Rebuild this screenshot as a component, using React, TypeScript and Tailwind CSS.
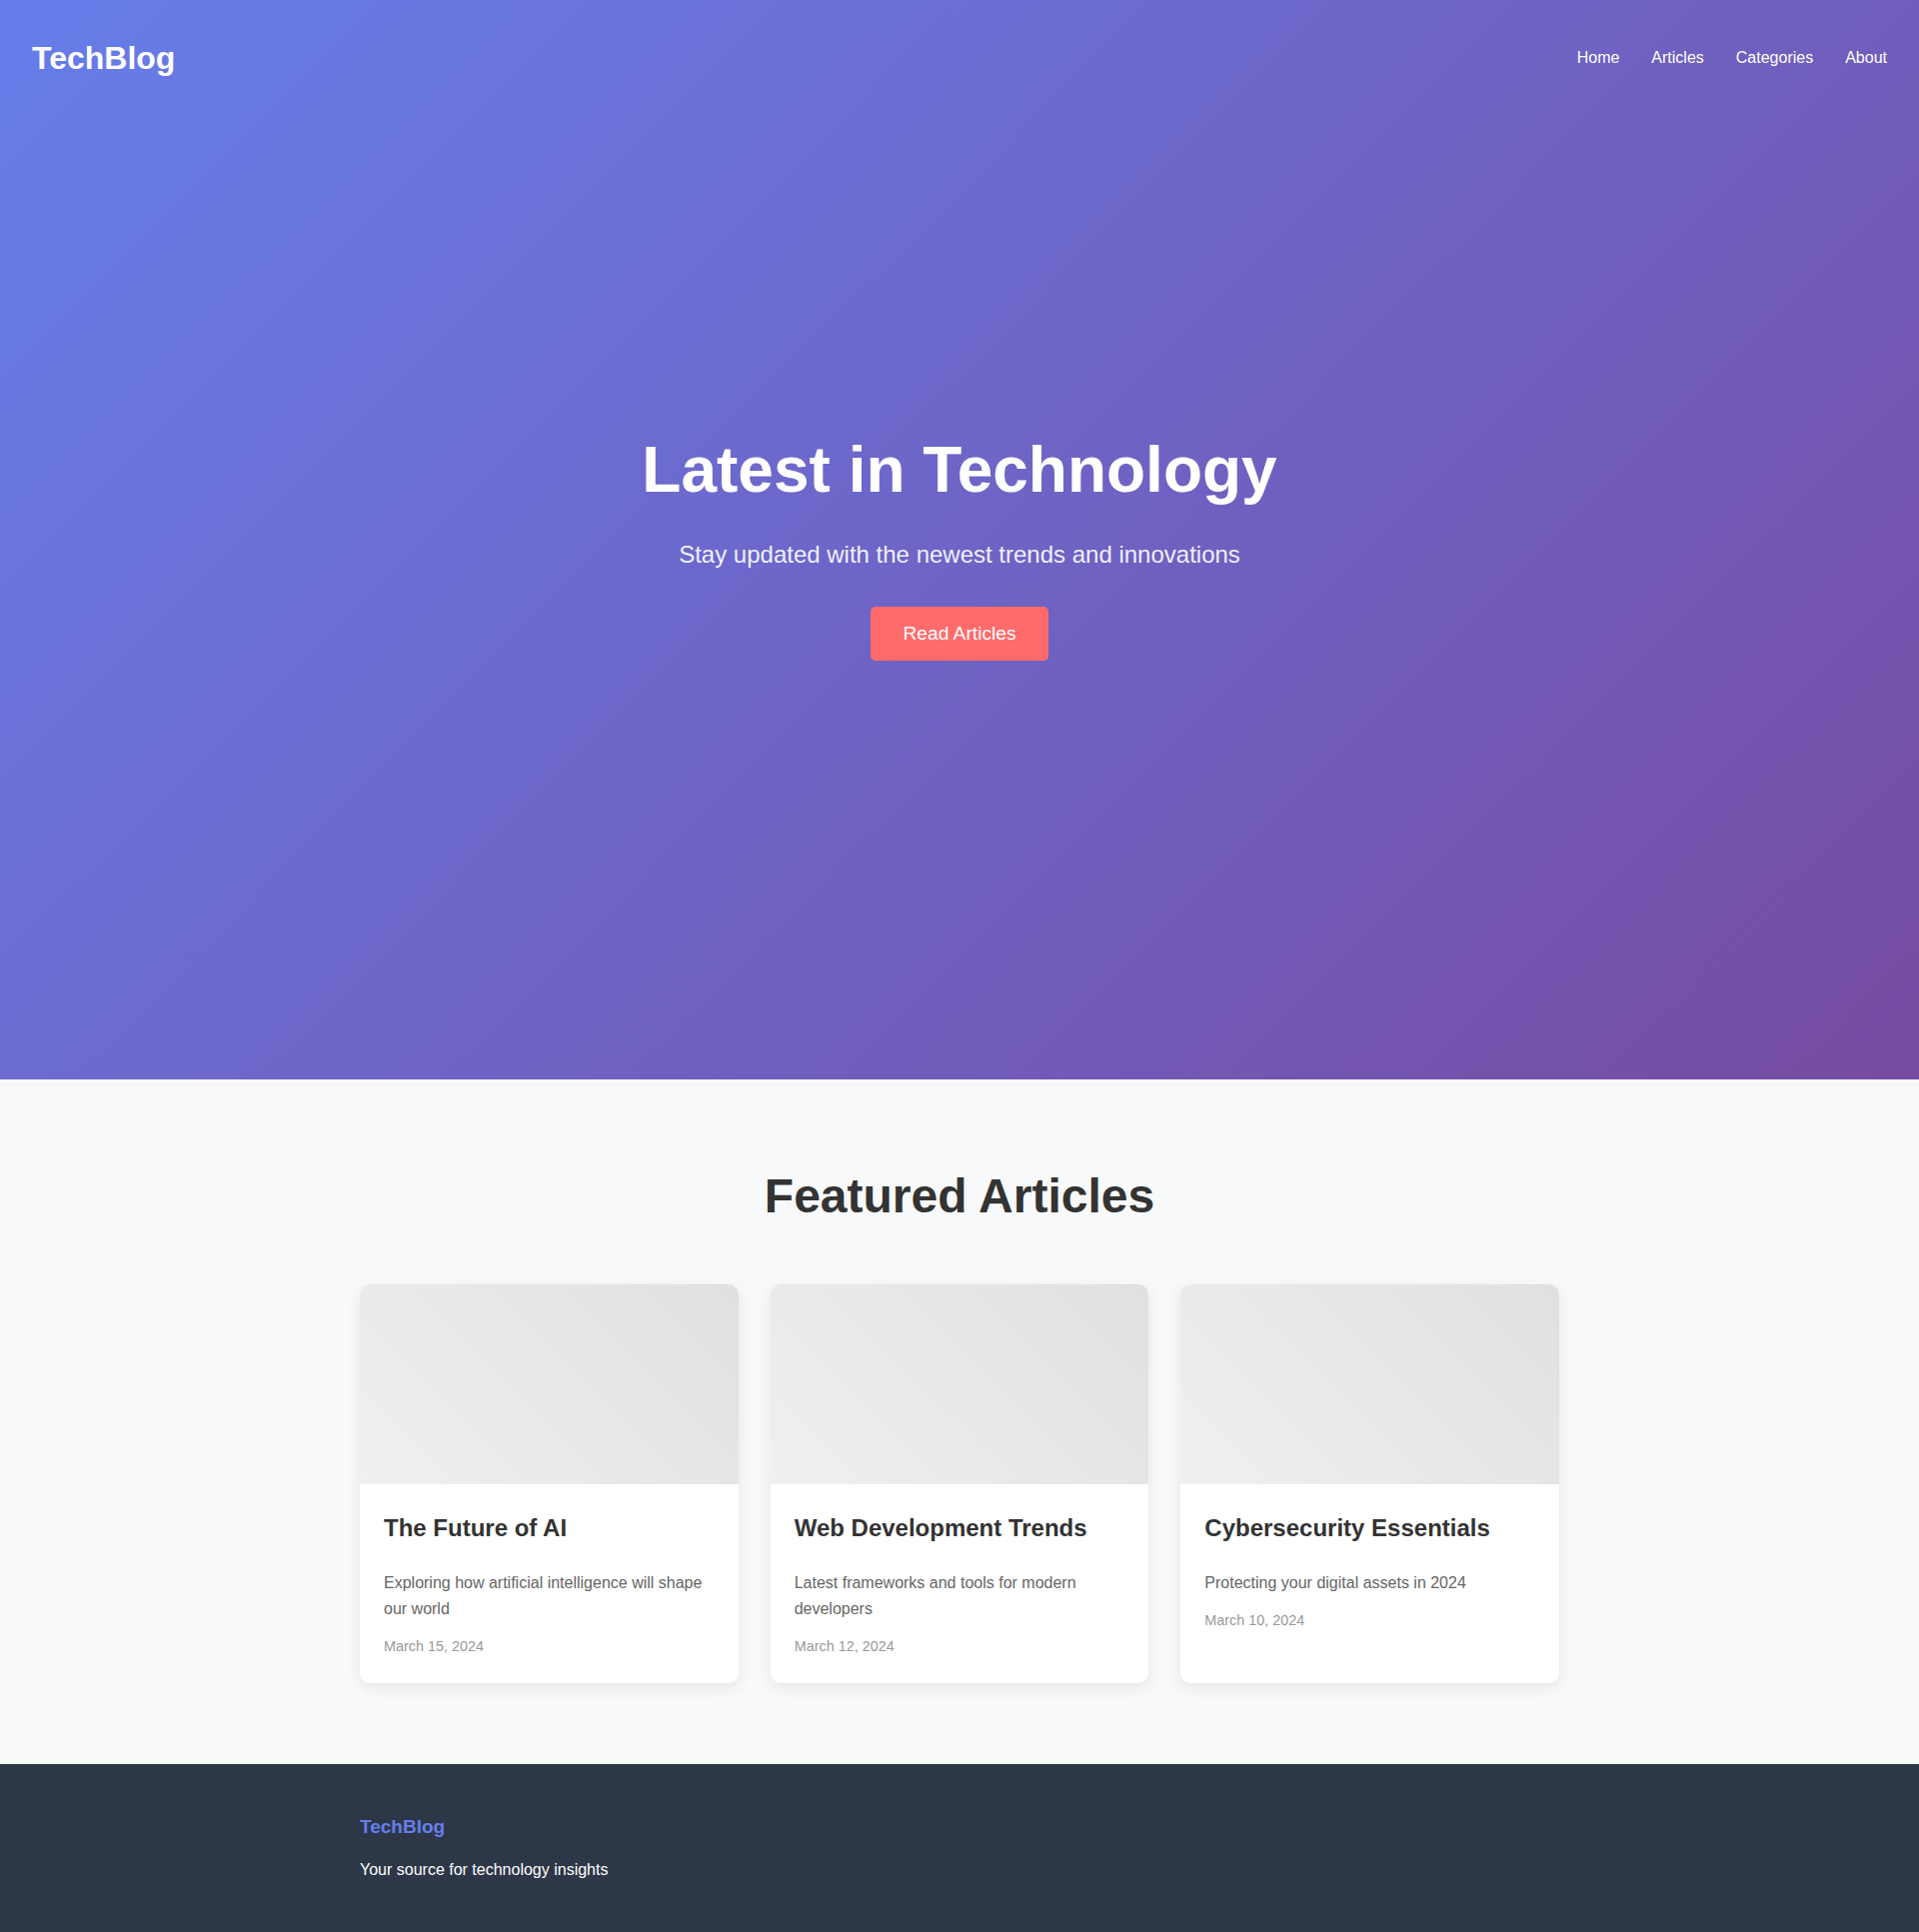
const navLinks = ['Home', 'Articles', 'Categories', 'About'];

const articles = [
  {
    title: 'The Future of AI',
    excerpt: 'Exploring how artificial intelligence will shape our world',
    date: 'March 15, 2024',
  },
  {
    title: 'Web Development Trends',
    excerpt: 'Latest frameworks and tools for modern developers',
    date: 'March 12, 2024',
  },
  {
    title: 'Cybersecurity Essentials',
    excerpt: 'Protecting your digital assets in 2024',
    date: 'March 10, 2024',
  },
];

export default function App() {
  return (
    <div className="min-h-screen bg-[#f8f9fa] font-['Liberation_Sans',Arial,sans-serif] leading-[1.6] text-[#333]">
      {/* Hero */}
      <section className="flex h-[1080px] flex-col bg-[linear-gradient(135deg,#667eea_0%,#764ba2_100%)] text-white">
        <header className="flex h-[116px] items-center justify-between px-8">
          <a href="#" className="text-[32px] font-bold leading-[1.15]">
            TechBlog
          </a>
          <nav className="flex gap-8">
            {navLinks.map((link) => (
              <a key={link} href="#" className="text-base leading-[1.15]">
                {link}
              </a>
            ))}
          </nav>
        </header>

        <div className="flex flex-col items-center pt-[318px] text-center">
          <h1 className="mb-[33px] text-[64px] font-bold leading-[1.15]">Latest in Technology</h1>
          <p className="mb-[39px] text-2xl leading-[1.15] opacity-90">
            Stay updated with the newest trends and innovations
          </p>
          <button className="rounded-[5px] bg-[#ff6b6b] px-8 py-4 text-[19.2px] leading-[1.15] text-white">
            Read Articles
          </button>
        </div>
      </section>

      {/* Featured */}
      <section className="px-8 pb-[81px] pt-[89px]">
        <div className="mx-auto max-w-[1200px]">
          <h2 className="mb-[61px] text-center text-5xl font-bold leading-[1.15] text-[#333]">
            Featured Articles
          </h2>
          <div className="grid grid-cols-3 gap-8">
            {articles.map((a) => (
              <article
                key={a.title}
                className="overflow-hidden rounded-[10px] bg-white shadow-[0_5px_15px_rgba(0,0,0,0.08)]"
              >
                <div className="h-[200px] bg-[linear-gradient(45deg,#f0f0f0,#e0e0e0)]" />
                <div className="px-6 pb-6 pt-7">
                  <h3 className="mb-[26px] text-2xl font-bold text-[#333]">{a.title}</h3>
                  <p className="mb-[11px] text-base leading-[26px] text-[#666]">{a.excerpt}</p>
                  <span className="text-[14.4px] text-[#999]">{a.date}</span>
                </div>
              </article>
            ))}
          </div>
        </div>
      </section>

      {/* Footer */}
      <footer className="bg-[#2d3748] px-8 pb-[51px] pt-12 text-white">
        <div className="mx-auto max-w-[1200px]">
          <h3 className="mb-4 text-[19px] font-bold text-[#667eea]">TechBlog</h3>
          <p className="text-base">Your source for technology insights</p>
        </div>
      </footer>
    </div>
  );
}
